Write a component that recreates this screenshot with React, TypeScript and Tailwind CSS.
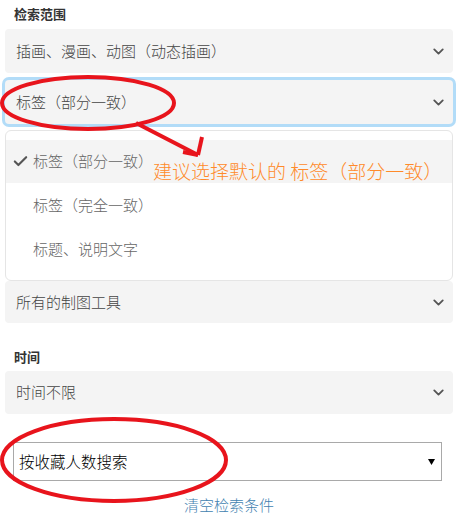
import React from 'react';
import { ChevronDown, Check } from 'lucide-react';

const font = { fontFamily: '"Noto Sans CJK SC", "Noto Sans", sans-serif' };

const FakeSelect: React.FC<{ label: string; className?: string }> = ({ label, className = '' }) => (
  <div
    className={`flex items-center justify-between bg-[#f4f4f4] rounded-[4px] pl-[11px] pr-[5px] text-[15px] font-light text-[#444] ${className}`}
  >
    <span>{label}</span>
    <ChevronDown size={17} strokeWidth={2.6} className="text-[#555] mr-[1px]" />
  </div>
);

const options = ['标签（部分一致）', '标签（完全一致）', '标题、说明文字'];

export default function App() {
  return (
    <div className="relative w-[471px] h-[522px] bg-white overflow-hidden" style={font}>
      <div className="w-[448px] ml-[5px]">
        <div className="pt-[4px] pl-[9px] h-[24px] leading-[20px] text-[13px] font-bold text-[#333]">检索范围</div>
        <FakeSelect label="插画、漫画、动图（动态插画）" className="mt-[5px] h-[44px]" />
        <FakeSelect label="标签（部分一致）" className="mt-[7px] h-[44px] ring-[3px] ring-[#b2dcf8]" />

        <div className="mt-[6px] border border-[#e5e5e5] rounded-[6px] py-[9px] bg-white">
          {options.map((o, i) => (
            <div
              key={o}
              className={`flex items-center pl-[6px] text-[15px] font-light text-[#666] ${i === 0 ? 'h-[43px] bg-[#f4f4f4]' : 'h-[44px]'}`}
            >
              <span className="w-[18px] mr-[3px] flex">
                {i === 0 && <Check size={17} strokeWidth={3} className="text-[#555]" />}
              </span>
              {o}
            </div>
          ))}
        </div>

        <FakeSelect label="所有的制图工具" className="h-[42px]" />

        <div className="mt-[24px] pl-[9px] h-[24px] leading-[20px] text-[13px] font-bold text-[#333]">时间</div>
        <FakeSelect label="时间不限" className="h-[43px]" />

        <div className="mt-[28px] ml-[8px] w-[429px] h-[39px] border border-[#a9a9a9] bg-white flex items-center justify-between pl-[5px] pr-[6px] text-[15.5px] font-light text-black">
          <span>按收藏人数搜索</span>
          <svg width="7" height="6" viewBox="0 0 7 6">
            <polygon points="0,0 7,0 3.5,6" fill="#000" />
          </svg>
        </div>

        <div className="mt-[14px] text-center leading-[20px] text-[15px] font-light text-[#3f7fb0]">清空检索条件</div>
      </div>

      {/* annotations drawn over the page */}
      <svg className="absolute inset-0 pointer-events-none" width="471" height="522" viewBox="0 0 471 522">
        <ellipse cx="88" cy="103" rx="86" ry="26" fill="none" stroke="#e8141c" strokeWidth="4" />
        <line x1="136" y1="123" x2="198" y2="155" stroke="#e8141c" strokeWidth="4" />
        <line x1="202" y1="137" x2="198" y2="155" stroke="#e8141c" strokeWidth="4" />
        <line x1="183" y1="152" x2="198" y2="155" stroke="#e8141c" strokeWidth="4" />
        <ellipse cx="114" cy="460" rx="112" ry="41" fill="none" stroke="#e8141c" strokeWidth="4" />
      </svg>
      <div className="absolute left-[153px] top-[160px] leading-[22px] text-[19px] font-light text-[#ff8a2a] whitespace-nowrap">
        建议选择默认的 标签（部分一致）
      </div>
    </div>
  );
}
